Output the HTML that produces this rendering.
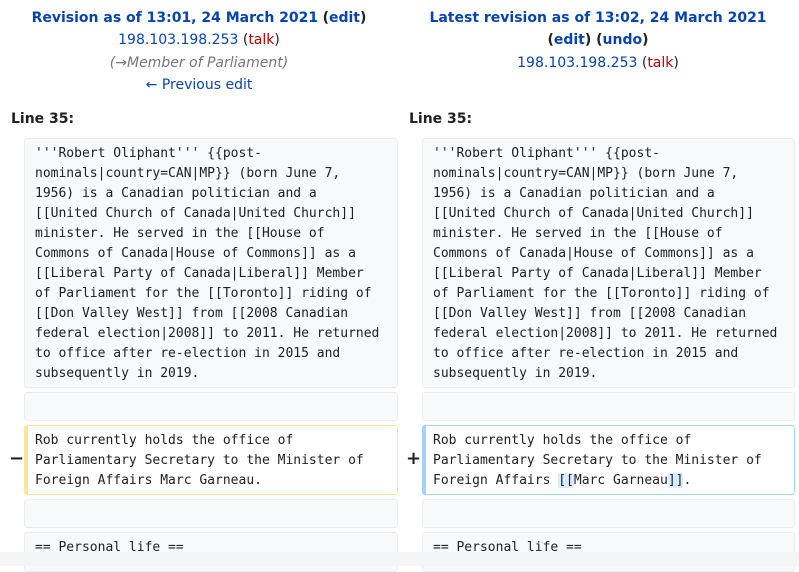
<!DOCTYPE html>
<html><head><meta charset="utf-8"><style>
body{margin:0;width:799px;height:566px;overflow:hidden;background:#fff;font-family:"DejaVu Sans","Liberation Sans",sans-serif;color:#202122;position:relative}
.h{position:absolute;width:398px;text-align:center;font-size:14px;line-height:22.4px}
a{color:#0645ad;text-decoration:none}
.r{color:#ba0000}
.i{color:#72777d;font-style:italic}
.b{font-weight:bold}
.ln{position:absolute;font-weight:bold;font-size:14px;top:111px}
.box{position:absolute;box-sizing:border-box;background:#f8f9fa;border:1px solid #eaecf0;border-radius:3px;font-family:"DejaVu Sans Mono","Liberation Mono",monospace;font-size:13px;line-height:20px;padding:5px 10px 4px;white-space:pre;color:#202122}
.L{left:24px;width:374px}.R{left:422px;width:373px}
.del{background:#fff;border:1px solid #ffe49c;border-left:4px solid #ffe49c;padding-left:7px}
.add{background:#fff;border:1px solid #a3d3ff;border-left:4px solid #a3d3ff;padding-left:7px}
.hl{background:#d8ecff;border-radius:2px}
.m{position:absolute;font-weight:bold;font-size:18px}
</style></head><body>
<div class="h" style="left:0;top:7px"><a class="b" href="#">Revision as of 13:01, 24 March 2021</a> <span class="b">(<a href="#">edit</a>)</span><br><a href="#">198.103.198.253</a> (<a class="r" href="#">talk</a>)<br><span class="i">(→Member of Parliament)</span><br><a href="#">← Previous edit</a></div>
<div class="h" style="left:399px;top:7px"><a class="b" href="#">Latest revision as of 13:02, 24 March 2021</a><br><span class="b">(<a href="#">edit</a>) (<a href="#">undo</a>)</span><br><a href="#">198.103.198.253</a> (<a class="r" href="#">talk</a>)</div>
<div class="ln" style="left:11px">Line 35:</div>
<div class="ln" style="left:409px">Line 35:</div>
<div class="box L" style="top:138px;height:250px">'''Robert Oliphant''' {{post-
nominals|country=CAN|MP}} (born June 7,
1956) is a Canadian politician and a
[[United Church of Canada|United Church]]
minister. He served in the [[House of
Commons of Canada|House of Commons]] as a
[[Liberal Party of Canada|Liberal]] Member
of Parliament for the [[Toronto]] riding of
[[Don Valley West]] from [[2008 Canadian
federal election|2008]] to 2011. He returned
to office after re-election in 2015 and
subsequently in 2019.</div>
<div class="box R" style="top:138px;height:250px">'''Robert Oliphant''' {{post-
nominals|country=CAN|MP}} (born June 7,
1956) is a Canadian politician and a
[[United Church of Canada|United Church]]
minister. He served in the [[House of
Commons of Canada|House of Commons]] as a
[[Liberal Party of Canada|Liberal]] Member
of Parliament for the [[Toronto]] riding of
[[Don Valley West]] from [[2008 Canadian
federal election|2008]] to 2011. He returned
to office after re-election in 2015 and
subsequently in 2019.</div>
<div class="box L" style="top:392px;height:29px"></div>
<div class="box R" style="top:392px;height:29px"></div>
<div class="m" style="left:9px;top:448px">−</div>
<div class="m" style="left:406px;top:448px">+</div>
<div class="box L del" style="top:425px;height:70px">Rob currently holds the office of
Parliamentary Secretary to the Minister of
Foreign Affairs Marc Garneau.</div>
<div class="box R add" style="top:425px;height:70px">Rob currently holds the office of
Parliamentary Secretary to the Minister of
Foreign Affairs <span class="hl">[[</span>Marc Garneau<span class="hl">]]</span>.</div>
<div class="box L" style="top:499px;height:29px"></div>
<div class="box R" style="top:499px;height:29px"></div>
<div class="box L" style="top:532px;height:40px">== Personal life ==</div>
<div class="box R" style="top:532px;height:40px">== Personal life ==</div>
<div style="position:absolute;left:0;top:552px;width:799px;height:14px;background:#f4f5f6;z-index:10"></div>
</body></html>
